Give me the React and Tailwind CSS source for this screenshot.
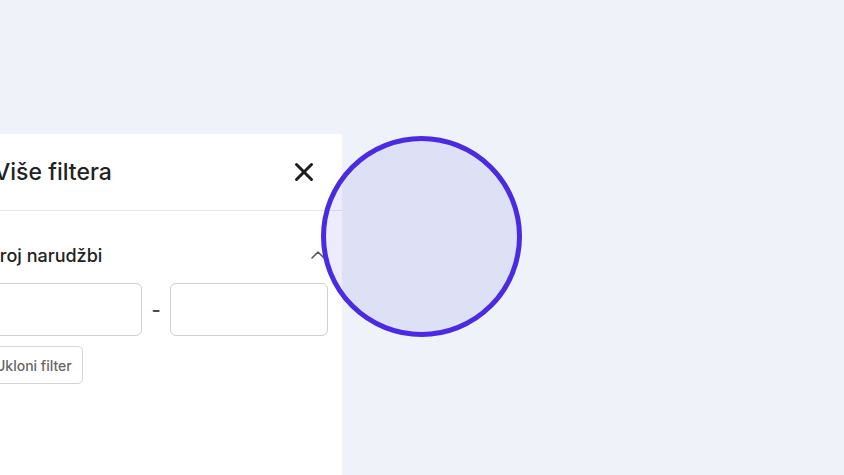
import React from "react";

export default function App() {
  return (
    <div className="relative w-[844px] h-[475px] overflow-hidden bg-[#eff2f8]" style={{ fontFamily: "Inter, 'Noto Sans', sans-serif" }}>
      <div className="flex h-full">
        <div className="-ml-[30px] mt-[134px] w-[372px] bg-white flex flex-col">
          <div className="h-[77px] flex items-center justify-between pl-[24px] pr-[28px] border-b border-[#e6e6e6]">
            <span className="text-[23px] font-medium text-[#222]">Više filtera</span>
            <svg width="20" height="20" viewBox="0 0 20 20" fill="none" stroke="#1e1e1e" strokeWidth="3" strokeLinecap="round">
              <path d="M2.5 2.5L17.5 17.5M17.5 2.5L2.5 17.5" />
            </svg>
          </div>
          <div className="pl-[14px] pr-[14px] pt-[32px] flex flex-col">
            <div className="flex items-center justify-between pl-[4px] h-[24px]">
              <span className="text-[18px] font-medium text-[#222]">Broj narudžbi</span>
              <svg width="16" height="10" viewBox="0 0 16 10" fill="none" stroke="#555" strokeWidth="1.5" strokeLinecap="round" strokeLinejoin="round" className="mr-[2px]">
                <path d="M2 8L8 2L14 8" />
              </svg>
            </div>
            <div className="mt-[16px] flex items-center">
              <div className="w-[158px] h-[53px] rounded-[6px] border border-[#cfcfcf] bg-white" />
              <div className="w-[28px] flex justify-center text-[20px] font-medium text-[#444]">-</div>
              <div className="w-[158px] h-[53px] rounded-[6px] border border-[#cfcfcf] bg-white" />
            </div>
            <div className="mt-[10px] flex">
              <div className="h-[38px] pl-[10px] pr-[10px] flex items-center rounded-[5px] border border-[#d5d5d5] text-[14px] font-medium text-[#666]">Ukloni filter</div>
            </div>
          </div>
        </div>
      </div>
      <div className="absolute left-[321px] top-[136px] w-[201px] h-[201px] rounded-full border-[5px] border-[#4b2be2] bg-[rgba(79,70,229,0.1)]" />
    </div>
  );
}
